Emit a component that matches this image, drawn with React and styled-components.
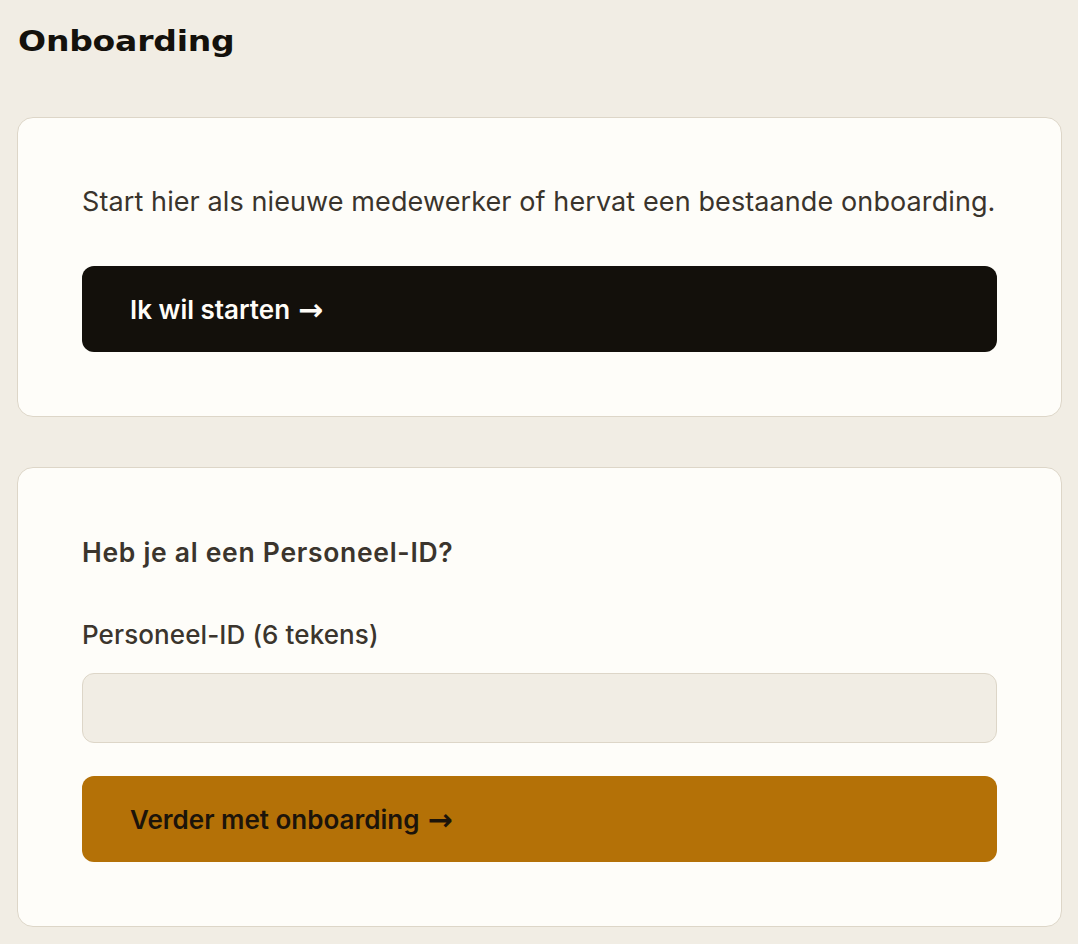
import React from 'react';
import styled, { createGlobalStyle } from 'styled-components';

const GlobalStyle = createGlobalStyle`
  html, body {
    margin: 0;
    padding: 0;
    background: #f1ede4;
  }
  body {
    font-family: Inter, "Noto Sans", sans-serif;
    color: #3a342c;
  }
`;

const Page = styled.div`
  padding: 20px 16px 18px 17px;
  display: flex;
  flex-direction: column;
`;

const Title = styled.h1`
  margin: 0 0 0 1px;
  align-self: flex-start;
  font-family: "DejaVu Sans", sans-serif;
  font-weight: 700;
  font-size: 29px;
  line-height: 42px;
  letter-spacing: -0.2px;
  color: #14110c;
  transform: scaleX(1.14);
  transform-origin: left center;
`;

const Stack = styled.div`
  margin-top: 55px;
  display: flex;
  flex-direction: column;
  gap: 50px;
`;

const Card = styled.section`
  background: #fefdf9;
  border: 1.5px solid #ddd6c8;
  border-radius: 16px;
  padding: 64px;
  display: flex;
  flex-direction: column;
`;

const Intro = styled.p`
  margin: 0 0 44px;
  font-size: 27px;
  line-height: 40px;
  font-weight: 400;
  letter-spacing: 0.1px;
  color: #3a342c;
  white-space: nowrap;
`;

const Heading = styled.h2`
  margin: 0 0 43px;
  font-size: 26.5px;
  line-height: 40px;
  font-weight: 600;
  letter-spacing: 0.7px;
  color: #3b352d;
`;

const Label = styled.label`
  display: block;
  margin: 0 0 18px;
  font-size: 26px;
  line-height: 40px;
  font-weight: 500;
  letter-spacing: 0.1px;
  color: #3b352d;
`;

const Input = styled.input`
  box-sizing: border-box;
  height: 70px;
  width: 100%;
  margin: 0 0 33px;
  padding: 0 20px;
  background: #f1ede4;
  border: 1.5px solid #ddd6c8;
  border-radius: 12px;
  font: inherit;
  font-size: 22px;
  outline: none;
`;

const Button = styled.button`
  box-sizing: border-box;
  width: 100%;
  height: 86px;
  padding: 0 48px;
  border: none;
  border-radius: 12px;
  display: flex;
  align-items: center;
  gap: 8px;
  font-family: Inter, "Noto Sans", sans-serif;
  font-size: 26px;
  font-weight: 600;
  cursor: pointer;
  background: ${(p) => (p.$variant === 'accent' ? '#b47107' : '#13100b')};
  color: ${(p) => (p.$variant === 'accent' ? '#1c140a' : '#fffdf8')};
`;

const Arrow = styled.span`
  font-family: "DejaVu Sans", sans-serif;
  font-weight: 700;
  font-size: 30px;
  line-height: 1;
  position: relative;
  top: 1px;
`;

export default function App() {
  return (
    <>
      <GlobalStyle />
      <Page>
        <Title>Onboarding</Title>
        <Stack>
          <Card>
            <Intro>Start hier als nieuwe medewerker of hervat een bestaande onboarding.</Intro>
            <Button>Ik wil starten<Arrow>→</Arrow></Button>
          </Card>
          <Card>
            <Heading>Heb je al een Personeel-ID?</Heading>
            <Label htmlFor="pid">Personeel-ID (6 tekens)</Label>
            <Input id="pid" maxLength={6} />
            <Button $variant="accent">Verder met onboarding<Arrow>→</Arrow></Button>
          </Card>
        </Stack>
      </Page>
    </>
  );
}
